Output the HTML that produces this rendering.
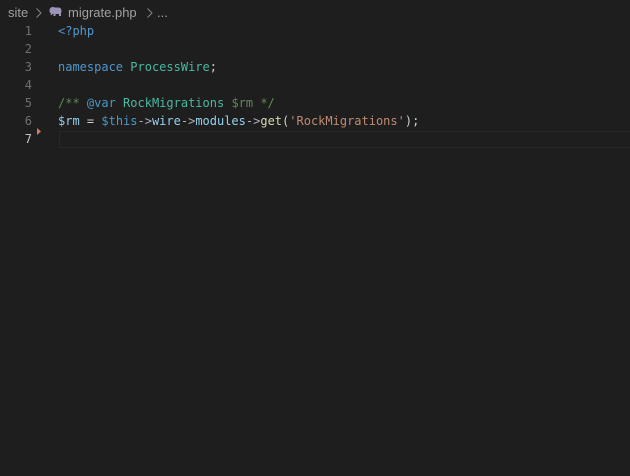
<!DOCTYPE html>
<html><head><meta charset="utf-8"><style>
html,body{margin:0;padding:0;background:#1e1e1e;width:630px;height:476px;overflow:hidden}
.abs{position:absolute;white-space:pre}
.bc{font:13px/22px "Liberation Sans",sans-serif;color:#a0a0a0;top:2px}
.ln{font:12px/18px "DejaVu Sans Mono",monospace;color:#6f6f6f;width:32px;text-align:right;left:0}
.c{font:12px/18px "DejaVu Sans Mono",monospace;color:#cfcfcf;left:58px}
.b{color:#4f97cc}.t{color:#4bb8a2}.v{color:#94d0ee}.f{color:#d8d8b0}.s{color:#c08a70}.g{color:#5f8a58}.k{color:#4a98c8}.a{color:#b0b0b0}
</style></head><body>
<div class="abs bc" style="left:8px">site</div>
<svg class="abs" style="left:35px;top:7px" width="8" height="12" viewBox="0 0 8 12"><path d="M1.500 1.500l4.500 4.500-4.500 4.500" fill="none" stroke="#858585" stroke-width="1"/></svg>
<svg class="abs" style="left:49px;top:6px" width="13" height="11" viewBox="0 0 13 11"><path d="M.5 5C.5 2 2 1 4 1c1 0 1.500.5 2 .5h3.500C11.500 1.500 12.500 3 12.500 5.500c0 1-.5 1.500-.5 1.500v3H10V8H6.500v2H4.500V7.500C3 8 3 8.500 3 9H1.500C1.500 8 2 7.500 2 7 1 7 .5 6.500.5 5z" fill="#9b93b8"/></svg>
<div class="abs bc" style="left:68px">migrate.php</div>
<svg class="abs" style="left:146px;top:7px" width="8" height="12" viewBox="0 0 8 12"><path d="M1.500 1.500l4.500 4.500-4.500 4.500" fill="none" stroke="#858585" stroke-width="1"/></svg>
<div class="abs bc" style="left:157px">...</div>
<div class="abs" style="left:59px;top:131px;width:571px;height:15px;border:1px solid #282828;border-right:0;box-sizing:content-box"></div>
<div class="abs ln" style="top:22px">1</div>
<div class="abs ln" style="top:40px">2</div>
<div class="abs ln" style="top:58px">3</div>
<div class="abs ln" style="top:76px">4</div>
<div class="abs ln" style="top:94px">5</div>
<div class="abs ln" style="top:112px">6</div>
<div class="abs ln" style="top:130px;color:#c6c6c6">7</div>
<svg class="abs" style="left:37px;top:128px" width="5" height="7" viewBox="0 0 5 7"><path d="M0 0l4 3.500L0 7z" fill="#c8805f"/></svg>
<div class="abs c" style="top:22px"><span class="b">&lt;?php</span></div>
<div class="abs c" style="top:58px"><span class="b">namespace</span> <span class="t">ProcessWire</span>;</div>
<div class="abs c" style="top:94px"><span class="g">/** </span><span class="k">@var</span> <span class="t">RockMigrations</span> <span class="g">$rm */</span></div>
<div class="abs c" style="top:112px"><span class="v">$rm</span> = <span class="k">$this</span><span class="a">-&gt;</span><span class="v">wire</span><span class="a">-&gt;</span><span class="v">modules</span><span class="a">-&gt;</span><span class="f">get</span>(<span class="s">'RockMigrations'</span>);</div>
</body></html>
